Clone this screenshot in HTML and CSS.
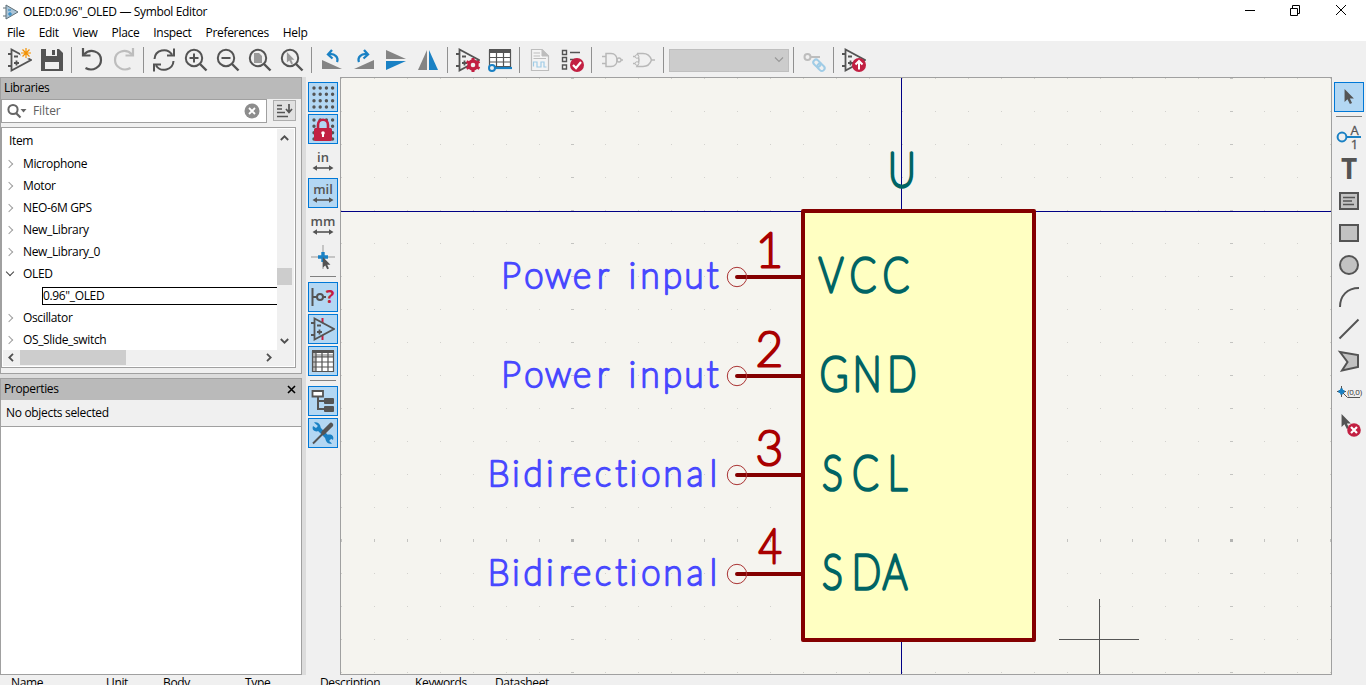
FILE: index.html
```html
<!DOCTYPE html>
<html lang="en">
<head>
<meta charset="utf-8">
<title>Symbol Editor</title>
<link rel="stylesheet" href="styles.css">
</head>
<body>
<svg class="defs" width="0" height="0">
  <symbol id="amp" viewBox="0 0 24 24"><path d="M3.5 1.5V22.5L23 12Z M0 6H3.5 M0 18H3.5 M6 8.5H10 M6 15H11 M8.5 12.5V17.5" fill="none" stroke="#545454" stroke-width="1.8"/></symbol>
  <symbol id="lens" viewBox="0 0 24 24"><circle cx="10" cy="10" r="8.2" fill="none" stroke="#545454" stroke-width="2"/><path d="M16 16L22.5 22.5" stroke="#545454" stroke-width="2.4"/></symbol>
  <symbol id="pointer" viewBox="0 0 12 18"><path d="M1 0V14.5L4.3 11.6L7 17L9.4 15.8L7 10.6H11.5Z"/></symbol>
  <symbol id="dots" viewBox="0 0 24 24"><path d="M3 3H22M3 9.3H22M3 15.7H22M3 22H22" stroke="#545454" stroke-width="3.4" stroke-linecap="round" stroke-dasharray="0 6.2"/></symbol>
  <symbol id="arrows" viewBox="0 0 24 6"><path d="M3 3H21" fill="none" stroke="#545454" stroke-width="1.6"/><path d="M1.500 3L6 .2V5.800ZM22.500 3L18 .2V5.800Z" fill="#545454"/></symbol>
</svg>
<div class="window">
  <header class="titlebar">
    <svg class="app-icon" viewBox="0 0 16 16"><path d="M3 1V15L15 8Z" fill="#a9c3d6" stroke="#607078"/><path d="M0 4H3M0 12H3" stroke="#607078"/><path d="M5 6H8M5 10H9M7 8V12" stroke="#1a81c4"/></svg>
    <span class="title">OLED:0.96"_OLED — Symbol Editor</span>
    <svg class="caption" width="106" height="12" viewBox="0 0 106 12"><path d="M1 6.500H11M46.500 4.500H53.500V11.500H46.500ZM48.500 4V1.500H55.500V9.500H54M92 1L102 11M102 1L92 11" fill="none" stroke="#000"/></svg>
  </header>
  <nav class="menu"><span>File</span><span>Edit</span><span>View</span><span>Place</span><span>Inspect</span><span>Preferences</span><span>Help</span></nav>
  <div class="toolbar">
    <span class="tool"><svg viewBox="0 0 24 24"><use href="#amp"/><circle cx="18" cy="5" r="6" fill="#f0f0f0"/><path d="M18 0V10M13 5H23M14.500 1.500L21.500 8.500M21.500 1.500L14.500 8.500" stroke="#f29100" stroke-width="1.200"/></svg></span>
    <span class="tool"><svg viewBox="0 0 24 24"><path d="M1 1H19L23 5V23H1Z" fill="#545454"/><path d="M6 1H17V8H6ZM5 14H19V21H5Z" fill="#f0f0f0"/><path d="M12 2H15V7H12Z" fill="#545454"/></svg></span>
    <i class="sep"></i>
    <span class="tool"><svg viewBox="0 0 24 24"><path d="M4 6.500C10 0 21 3 21 12C21 19 13 24 5.500 20" fill="none" stroke="#545454" stroke-width="2.200"/><path d="M3 0V7.500H10.500" fill="none" stroke="#545454" stroke-width="2.200"/></svg></span>
    <span class="tool"><svg viewBox="0 0 24 24"><path d="M20 6.500C14 0 3 3 3 12C3 19 11 24 18.500 20" fill="none" stroke="#bdbdbd" stroke-width="2.200"/><path d="M21 0V7.500H13.500" fill="none" stroke="#bdbdbd" stroke-width="2.200"/></svg></span>
    <i class="sep"></i>
    <span class="tool"><svg viewBox="0 0 24 24"><path d="M2.500 11C3 2 15 -1 20 6.500M22 .5V7.500H15M21.500 13C21 22 9 25 4 17.500M2 23.500V16.500H9" fill="none" stroke="#545454" stroke-width="2"/></svg></span>
    <span class="tool"><svg viewBox="0 0 24 24"><use href="#lens"/><path d="M5.500 10H14.500M10 5.500V14.500" stroke="#545454" stroke-width="2"/></svg></span>
    <span class="tool"><svg viewBox="0 0 24 24"><use href="#lens"/><path d="M5.500 10H14.500" stroke="#545454" stroke-width="2"/></svg></span>
    <span class="tool"><svg viewBox="0 0 24 24"><path d="M6 5H11L14 8V15H6Z" fill="#999"/><use href="#lens"/></svg></span>
    <span class="tool"><svg viewBox="0 0 24 24"><use href="#pointer" x="6" y="4" width="9" height="13" fill="#999"/><use href="#lens"/></svg></span>
    <i class="sep"></i>
    <span class="tool"><svg viewBox="0 0 24 24"><path d="M2 12V21H22Z" fill="#848484"/><path d="M17 14C19 9 14 5 9 6.500M12 2L8 6.500L12.500 10.500" fill="none" stroke="#1a81c4" stroke-width="2.300"/></svg></span>
    <span class="tool"><svg viewBox="0 0 24 24"><path d="M22 12V21H2Z" fill="#848484"/><path d="M7 14C5 9 10 5 15 6.500M12 2L16 6.500L11.500 10.500" fill="none" stroke="#1a81c4" stroke-width="2.300"/></svg></span>
    <span class="tool"><svg viewBox="0 0 24 24"><path d="M2 2V11H22Z" fill="#848484"/><path d="M2 13H22L2 22Z" fill="#1a81c4"/></svg></span>
    <span class="tool"><svg viewBox="0 0 24 24"><path d="M2 22H11V2Z" fill="#848484"/><path d="M13 2V22H22Z" fill="#1a81c4"/></svg></span>
    <i class="sep"></i>
    <span class="tool"><svg viewBox="0 0 24 24"><use href="#amp"/><circle cx="17" cy="17" r="4" fill="#f0f0f0" stroke="#c22042" stroke-width="3.400"/><path d="M17 10V13M17 21V24M10.500 13.500L13.500 15M20.500 19L23.500 20.500M10.500 20.500L13.500 19M20.500 15L23.500 13.500" stroke="#c22042" stroke-width="3"/></svg></span>
    <span class="tool"><svg viewBox="0 0 24 24"><path d="M1.500 2H22.500V19H1.500Z" fill="#fff"/><path d="M1 1H23V5H1Z" fill="#545454"/><path d="M1.500 2V18.500H22.500V2M1 9.500H23M1 14H23M8.500 4V19M15.500 4V19" fill="none" stroke="#545454" stroke-width="1.200"/><path d="M5 20H24" stroke="#1a81c4" stroke-width="2.200"/><circle cx="4" cy="20" r="3" fill="#f0f0f0" stroke="#1a81c4" stroke-width="2"/></svg></span>
    <i class="sep"></i>
    <span class="tool"><svg viewBox="0 0 24 24"><path d="M3.500 1.500H14L20.500 8V22.500H3.500Z" fill="#f4f4f4" stroke="#bdbdbd" stroke-width="1.200"/><path d="M14 1.500V8H20.500ZM5.500 5H12M5.500 8H12M5.500 10.500H18" fill="#bdbdbd" stroke="#bdbdbd"/><path d="M5.500 18.500V14H9V19H13V14H16V19H18.500" fill="none" stroke="#a0cce6" stroke-width="1.200"/></svg></span>
    <span class="tool"><svg viewBox="0 0 24 24"><path d="M2.500 2.500H6.500V6.500H2.500ZM2.500 9.500H6.500V13.500H2.500ZM2.500 17H6.500V21H2.500ZM10 4.500H20M10 11.500H17" fill="none" stroke="#545454" stroke-width="1.400"/><circle cx="17" cy="17" r="7" fill="#c22042"/><path d="M13 17L16 20L21 14" fill="none" stroke="#fff" stroke-width="2.200"/></svg></span>
    <i class="sep"></i>
    <span class="tool"><svg viewBox="0 0 24 24"><path d="M6 5.500H11C19 5.500 19 18.500 11 18.500H6ZM2 8.500H6M2 15.500H6M21 12H23" fill="none" stroke="#b8b8b8" stroke-width="1.500"/><circle cx="19" cy="12" r="2" fill="none" stroke="#b8b8b8" stroke-width="1.300"/></svg></span>
    <span class="tool"><svg viewBox="0 0 24 24"><path d="M5 5.500H11C16 5.500 18.500 9 19.500 12C18.500 15 16 18.500 11 18.500H5Q9 12 5 5.500M1 8.500H3M1 15.500H3M20 12H23" fill="none" stroke="#b8b8b8" stroke-width="1.500"/><circle cx="5" cy="8.500" r="1.800" fill="#f0f0f0" stroke="#b8b8b8"/><circle cx="5" cy="15.500" r="1.800" fill="#f0f0f0" stroke="#b8b8b8"/></svg></span>
    <i class="sep"></i>
    <span class="combo"><svg width="10" height="6" viewBox="0 0 10 6"><path d="M1 .5L5 4.500L9 .5" fill="none" stroke="#999" stroke-width="1.200"/></svg></span>
    <i class="sep"></i>
    <span class="tool"><svg viewBox="0 0 24 24"><circle cx="5.500" cy="9" r="3" fill="none" stroke="#bdbdbd" stroke-width="2"/><path d="M8.500 9H18" stroke="#bdbdbd" stroke-width="2"/><g fill="none" stroke="#a0cce6" stroke-width="2"><rect x="11" y="12.500" width="8" height="5.500" rx="2.700" transform="rotate(45 15 15.200)"/><rect x="15" y="16.500" width="8" height="5.500" rx="2.700" transform="rotate(45 19 19.200)"/></g></svg></span>
    <i class="sep"></i>
    <span class="tool"><svg viewBox="0 0 24 24"><use href="#amp"/><circle cx="17" cy="17" r="7" fill="#c22042"/><path d="M17 21.500V13.500M13.500 16.500L17 13L20.500 16.500" fill="none" stroke="#fff" stroke-width="2"/></svg></span>
  </div>
  <main class="work">
    <aside class="side">
      <section class="panel libs">
        <h2>Libraries</h2>
        <div class="search-row">
          <div class="search">
            <svg width="22" height="16" viewBox="0 0 22 16"><circle cx="7" cy="6.500" r="4.600" fill="none" stroke="#666" stroke-width="2"/><path d="M10 10L14.500 14.500" stroke="#666" stroke-width="2.200"/><path d="M14.500 6H20.500L17.500 9.500Z" fill="#666"/></svg>
            <span>Filter</span>
            <svg class="clear" width="16" height="16" viewBox="0 0 16 16"><circle cx="8" cy="8" r="7.500" fill="#8d8d8d"/><path d="M5 5L11 11M11 5L5 11" stroke="#fff" stroke-width="1.800"/></svg>
          </div>
          <div class="sort"><svg width="18" height="16" viewBox="0 0 18 16"><path d="M1 2.500H6M1 6H6M1 9.500H9M1 13.500H12" stroke="#545454" stroke-width="1.700"/><path d="M13 1V9M10 6L13 9.500L16 6" fill="none" stroke="#545454" stroke-width="1.700"/></svg></div>
        </div>
        <div class="tree">
          <div class="list">
            <div class="row head">Item</div>
            <div class="row"><b class="chev"></b>Microphone</div>
            <div class="row"><b class="chev"></b>Motor</div>
            <div class="row"><b class="chev"></b>NEO-6M GPS</div>
            <div class="row"><b class="chev"></b>New_Library</div>
            <div class="row"><b class="chev"></b>New_Library_0</div>
            <div class="row"><b class="chev open"></b>OLED</div>
            <div class="row"><span class="current">0.96"_OLED</span></div>
            <div class="row"><b class="chev"></b>Oscillator</div>
            <div class="row"><b class="chev"></b>OS_Slide_switch</div>
          </div>
          <div class="vbar"><svg viewBox="0 0 9 6"><path d="M.8 5L4.500 1.300L8.200 5" /></svg><i></i><svg viewBox="0 0 9 6"><path d="M.8 1L4.500 4.700L8.200 1"/></svg></div>
          <div class="hbar"><svg viewBox="0 0 6 9"><path d="M5 .8L1.300 4.500L5 8.200"/></svg><i></i><svg viewBox="0 0 6 9"><path d="M1 .8L4.700 4.500L1 8.200"/></svg></div>
        </div>
      </section>
      <section class="panel props">
        <h2>Properties<svg width="9" height="9" viewBox="0 0 9 9"><path d="M1 1L8 8M8 1L1 8" stroke="#000" stroke-width="1.600"/></svg></h2>
        <p>No objects selected</p>
        <div class="blank"></div>
      </section>
    </aside>
    <div class="rail left">
      <span class="btn on"><svg viewBox="0 0 24 24"><use href="#dots"/></svg></span>
      <span class="btn on"><svg viewBox="0 0 24 24"><use href="#dots"/><path d="M7 12V8C7 1 17 1 17 8V12" fill="#b3d7f3" stroke="#c22042" stroke-width="2.600"/><rect x="3" y="11" width="18" height="13" rx="1.500" fill="#c22042"/><path d="M12 16V20" stroke="#fff" stroke-width="2"/><circle cx="12" cy="16" r="1.800" fill="#fff"/></svg></span>
      <span class="btn"><svg viewBox="0 0 24 24"><text class="unit" x="12" y="13">in</text><use href="#arrows" y="16" height="6"/></svg></span>
      <span class="btn on"><svg viewBox="0 0 24 24"><text class="unit" x="12" y="13">mil</text><use href="#arrows" y="16" height="6"/></svg></span>
      <span class="btn"><svg viewBox="0 0 24 24"><text class="unit" x="12" y="13">mm</text><use href="#arrows" y="16" height="6"/></svg></span>
      <span class="btn"><svg viewBox="0 0 24 24"><path d="M12 0V24M0 12H24" stroke="#999"/><path d="M12 7V17M7 12H17" stroke="#1a81c4" stroke-width="3.400"/><use href="#pointer" x="11" y="12" width="9" height="13" fill="#545454"/></svg></span>
      <i class="line"></i>
      <span class="btn on"><svg viewBox="0 0 24 24"><path d="M1.500 3V21M2 12H6M12 12H15" stroke="#545454" stroke-width="2"/><circle cx="9" cy="12" r="3" fill="none" stroke="#545454" stroke-width="2"/><text class="ask" x="19" y="18">?</text></svg></span>
      <span class="btn on"><svg viewBox="0 0 24 24"><path d="M11.500 1V23" stroke="#c22042" stroke-width="2"/><path d="M4 2V22L22 12Z" fill="#b3d7f3"/><use href="#amp"/></svg></span>
      <span class="btn on"><svg viewBox="0 0 24 24"><path d="M1.500 2H22.500V22.500H1.500Z" fill="#fff"/><path d="M1 4H5V23H1ZM5 5H23V8H5Z" fill="#b9b9b9"/><path d="M1 1H23V4H1Z" fill="#545454"/><path d="M1.500 2V22.500H22.500V2M1 8H23M1 13H23M1 18H23M5 4V23M11 4V23M17 4V23" fill="none" stroke="#545454" stroke-width="1.200"/></svg></span>
      <i class="line"></i>
      <span class="btn on"><svg viewBox="0 0 24 24"><path d="M1.500 2H12V7.500H1.500Z" fill="#fff" stroke="#545454" stroke-width="1.800"/><path d="M7 7V20H14M7 12H14" fill="none" stroke="#545454" stroke-width="2"/><path d="M13.500 9H22.500L23 10V14L22.500 15H13.500L13 14V10ZM13.500 17H22.500L23 18V22L22.500 23H13.500L13 22V18Z" fill="#545454"/></svg></span>
      <span class="btn on"><svg viewBox="0 0 24 24"><path d="M6 6L19 19" stroke="#1a81c4" stroke-width="4"/><path d="M3 1.500L7 5L6.500 8L2 5C0 10 6 12 9 9C11 6 8 0 3 1.500M21 22.500L17 19L17.500 16L22 19C24 14 18 12 15 15C13 18 16 24 21 22.500" fill="#1a81c4"/><path d="M2 22.500L13 11.500" stroke="#545454" stroke-width="2"/><path d="M12.500 11.500L20 4" stroke="#545454" stroke-width="4.500" stroke-linecap="round"/></svg></span>
    </div>
    <div class="canvas">
      <svg width="990" height="596" viewBox="341 78 990 596">
        <g id="grid"></g>
        <path d="M901.500 78V674M341 211.500H1331" stroke="#000084"/>
        <rect x="803" y="211" width="231" height="429" fill="#ffffc2" stroke="#840000" stroke-width="4" stroke-linejoin="round"/>
        <g class="pins"><path d="M737 277H803M737 376H803M737 475H803M737 574H803"/><circle cx="737" cy="277" r="9.700"/><circle cx="737" cy="376" r="9.700"/><circle cx="737" cy="475" r="9.700"/><circle cx="737" cy="574" r="9.700"/></g>
        <g class="plot type">
          <text x="511 534 558 582 603 617 632.500 650 672.500 694 712.500" y="288">Power input</text>
          <text x="511 534 558 582 603 617 632.500 650 672.500 694 712.500" y="387">Power input</text>
          <text x="498.500 516 533 550 565 582 603 621 633.500 651 673 695 713.500" y="486">Bidirectional</text>
          <text x="498.500 516 533 550 565 582 603 621 633.500 651 673 695 713.500" y="585">Bidirectional</text>
        </g>
        <g class="plot num"><text x="769.500" y="266.500">1</text><text x="769.500" y="365.500">2</text><text x="769.500" y="464.500">3</text><text x="906" y="563" transform="scale(.85 1)">4</text></g>
        <g class="plot name" transform="scale(.82 1)">
          <text x="1100" y="187">U</text>
          <text x="1013.400 1052.400 1092.600" y="292">VCC</text>
          <text x="1017 1057.500 1100" y="391">GND</text>
          <text x="1015.200 1055.500 1094.500" y="490">SCL</text>
          <text x="1015.200 1056.500 1091.500" y="589">SDA</text>
        </g>
        <path d="M1059 639.500H1139M1099.500 599V674" stroke="#555"/>
      </svg>
    </div>
    <div class="rail right">
      <span class="btn on"><svg viewBox="0 0 24 24"><use href="#pointer" x="6" y="4" width="12" height="16" fill="#545454"/></svg></span>
      <i class="line"></i>
      <span class="btn"><svg viewBox="0 0 24 24"><circle cx="5" cy="12" r="4.400" fill="none" stroke="#1a81c4" stroke-width="2"/><path d="M9 12H24" stroke="#1a81c4" stroke-width="2"/><text class="pin" x="17.500" y="10">A</text><text class="pin" x="17.500" y="24">1</text></svg></span>
      <span class="btn"><svg viewBox="0 0 24 24"><text class="big" x="12" y="22">T</text></svg></span>
      <span class="btn"><svg viewBox="0 0 24 24"><rect x="3" y="4" width="18" height="16" fill="#c2c2c2" stroke="#545454" stroke-width="2"/><path d="M6 8.500H18M6 12H15M6 15.500H17" stroke="#545454" stroke-width="1.300"/></svg></span>
      <span class="btn"><svg viewBox="0 0 24 24"><rect x="3" y="4" width="18" height="16" fill="#c2c2c2" stroke="#545454" stroke-width="2"/></svg></span>
      <span class="btn"><svg viewBox="0 0 24 24"><circle cx="12" cy="12" r="9" fill="#c2c2c2" stroke="#545454" stroke-width="2"/></svg></span>
      <span class="btn"><svg viewBox="0 0 24 24"><path d="M3 22C3 11 10 3 22 3" fill="none" stroke="#545454" stroke-width="2"/></svg></span>
      <span class="btn"><svg viewBox="0 0 24 24"><path d="M2.500 21.500L21.500 2.500" stroke="#545454" stroke-width="2"/></svg></span>
      <span class="btn"><svg viewBox="0 0 24 24"><path d="M3 3L21 6V18L5 21.500L10.500 13Z" fill="#c2c2c2" stroke="#545454" stroke-width="2"/></svg></span>
      <span class="btn"><svg viewBox="0 0 24 24"><path d="M4.500 5V16M0 10.500H9" stroke="#545454"/><path d="M4.500 7.500V13.500M1.500 10.500H7.500" stroke="#1a81c4" stroke-width="2.800"/><path d="M6 12L10.500 16.500H23" fill="none" stroke="#545454"/><text class="origin" x="17.500" y="14">(0,0)</text></svg></span>
      <span class="btn"><svg viewBox="0 0 24 24"><use href="#pointer" x="3" y="1" width="12" height="16" fill="#545454"/><circle cx="17" cy="17" r="6.800" fill="#c22042"/><path d="M14 14L20 20M20 14L14 20" stroke="#fff" stroke-width="2.200"/></svg></span>
    </div>
  </main>
  <footer class="info"><span>Name</span><span>Unit</span><span>Body</span><span>Type</span><span>Description</span><span>Keywords</span><span>Datasheet</span></footer>
</div>
<script src="grid.js"></script>
</body>
</html>
```

FILE: styles.css
```css
* { box-sizing: border-box; }
body { margin: 0; overflow: hidden; font: 12px/16px "Open Sans", "Noto Sans", sans-serif; letter-spacing: -.35px; color: #000; }
svg { display: block; flex: none; }
.defs { position: absolute; }
.window { width: 1366px; height: 685px; display: flex; flex-direction: column; overflow: hidden; background: #f0f0f0; }

.titlebar { height: 23px; flex: none; background: #fff; display: flex; align-items: center; padding-left: 3px; }
.app-icon { width: 16px; height: 16px; margin-right: 4px; }
.title { letter-spacing: -.35px; }
.caption { margin-left: auto; margin-right: 16px; margin-top: -3px; }
.menu { height: 18px; flex: none; background: #fff; display: flex; gap: 14px; padding: 2px 0 0 7px; letter-spacing: -.33px; }

.toolbar { height: 36px; flex: none; display: flex; align-items: center; padding: 2px 0 0 4px; }
.tool { width: 32px; height: 32px; display: grid; place-items: center; }
.tool svg, .btn svg { width: 24px; height: 24px; overflow: visible; }
.sep { width: 5px; height: 26px; border-left: 1px solid #909090; margin-left: 3px; }
.combo { width: 120px; height: 23px; margin: 0 1px; background: #ccc; border: 1px solid #bfbfbf; display: flex; align-items: center; justify-content: flex-end; padding-right: 4px; }

.work { flex: none; height: 598px; display: flex; }
.side { width: 306px; background: #dcdcdc; display: flex; flex-direction: column; gap: 4px; padding-right: 4px; }
.panel { border: 1px solid #a0a0a0; background: #f0f0f0; display: flex; flex-direction: column; }
.libs { height: 297px; }
.props { height: 297px; }
.panel h2 { margin: 0; height: 21px; flex: none; background: #bababa; font-size: 12px; line-height: 16px; font-weight: 400; padding: 0 5px 1px 3px; display: flex; align-items: center; justify-content: space-between; }
.search-row { display: flex; gap: 6px; height: 24px; flex: none; }
.search { width: 266px; border: 1px solid #a0a0a0; background: #fff; display: flex; align-items: center; padding: 0 6px 1px 4px; gap: 5px; color: #606060; letter-spacing: -.1px; }
.clear { margin-left: auto; }
.sort { width: 23px; height: 21px; margin-top: 1px; border: 1px solid #adadad; background: #e1e1e1; display: grid; place-items: center; }
.tree { width: 295px; height: 241px; margin-top: 4px; border: 1px solid #a0a0a0; background: #fff; padding: 1px; display: grid; grid-template: 221px 16px / 274px 17px; }
.list { overflow: hidden; }
.row { height: 22px; display: flex; align-items: center; padding-left: 4px; }
.row.head { height: 24px; padding-left: 6px; }
.chev { width: 6px; height: 6px; border: solid #a0a0a0; border-width: 1.500px 1.500px 0 0; transform: rotate(45deg); margin: 0 11px 0 -1px; }
.chev.open { border-color: #444; transform: translate(1px, -2px) rotate(135deg); }
.row .current { margin-left: 35px; height: 18px; width: 240px; border: 1px solid #000; border-right: 0; flex: none; }
.vbar, .hbar { background: #f0f0f0; display: flex; align-items: center; }
.vbar { flex-direction: column; padding: 6px 2px 6px 0; }
.vbar svg { width: 9px; height: 6px; }
.vbar i { width: 15px; height: 17px; background: #cdcdcd; margin: 127px 0 auto; }
.hbar { grid-column: 1 / 3; padding: 0 0 1px 5px; }
.hbar svg { width: 6px; height: 9px; }
.hbar i { width: 106px; height: 15px; background: #cdcdcd; margin: 0 140px 0 6px; }
.vbar path, .hbar path { fill: none; stroke: #505050; stroke-width: 1.800; }
.props p { margin: 0; height: 26px; padding: 5px 5px 4px; flex: none; letter-spacing: -.32px; }
.blank { flex: 1; background: #fff; border-top: 1px solid #a0a0a0; }

.rail { display: flex; flex-direction: column; gap: 2px; padding-top: 5px; }
.rail.left { width: 34px; padding-left: 2px; }
.rail.right { width: 34px; padding-left: 2px; }
.btn { width: 30px; height: 30px; flex: none; border: 1px solid transparent; display: grid; place-items: center; }
.btn.on { background: #b3d7f3; border-color: #0078d7; }
.line { height: 6px; width: 26px; margin-left: 2px; flex: none; border-top: 1px solid #808080; margin-top: 2px; margin-bottom: -2px; }
.unit { font: 600 13px "Open Sans", sans-serif; letter-spacing: 0; text-anchor: middle; fill: #545454; }
.ask { font: 700 18px "Open Sans", sans-serif; letter-spacing: 0; text-anchor: middle; fill: #c22042; }
.pin { font: 13px "Open Sans", sans-serif; letter-spacing: 0; text-anchor: middle; fill: #545454; stroke: #545454; stroke-width: .3px; }
.big { font: 700 28px "Open Sans", sans-serif; letter-spacing: 0; text-anchor: middle; fill: #545454; }
.origin { font: 8px "Open Sans", sans-serif; letter-spacing: -.3px; text-anchor: middle; fill: #333; }

.canvas { width: 992px; height: 598px; border: 1px solid #a0a0a0; background: #f5f4ef; }
.pins { fill: none; stroke: #840000; stroke-width: 4; stroke-linecap: round; }
.pins circle { stroke: #a33; stroke-width: 1; }
.plot { letter-spacing: 0; text-anchor: middle; stroke-linecap: round; stroke-linejoin: round; font-family: Lato, sans-serif; font-weight: 100; }
.type { font-size: 35px; fill: #4848ff; stroke: #4848ff; stroke-width: 2.400px; }
.num { font-size: 47px; fill: #a90000; stroke: #a90000; stroke-width: 3.200px; }
.name { font-size: 47px; fill: #006464; stroke: #006464; stroke-width: 3.600px; }

.info { height: 10px; flex: none; overflow: hidden; display: grid; grid-template-columns: 95px 57px 82px 75px 95px 80px auto; padding: 0 0 0 11px; }
```

FILE: grid.js
```js
// Grid dots every 100 mil; every 20th row and column is emphasised.
const STEP = 32.97, X0 = 572, Y0 = 540;
let marks = '';
for (let i = -7; i <= 23; i++) {
  for (let j = -14; j <= 4; j++) {
    const x = Math.round(X0 + i * STEP), y = Math.round(Y0 + j * STEP);
    const w = i % 20 === 0 ? 3 : 1, h = j % 20 === 0 ? 3 : 1;
    const fill = w * h === 9 ? '#b4b4b2' : w * h === 3 ? '#c4c4c1' : '#d2d1cd';
    marks += `<rect x="${x - (w >> 1)}" y="${y - (h >> 1)}" width="${w}" height="${h}" fill="${fill}"/>`;
  }
}
document.getElementById('grid').innerHTML = marks;
```
